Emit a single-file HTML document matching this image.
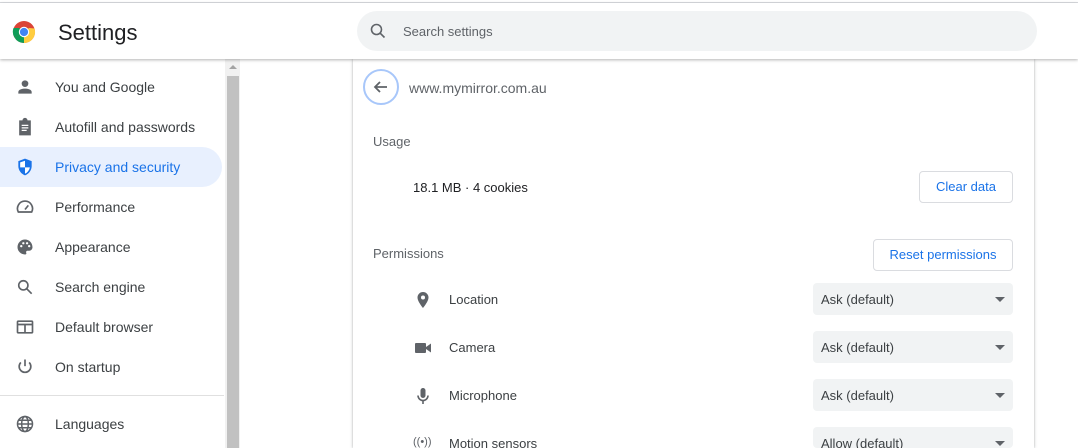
<!DOCTYPE html>
<html style="overflow:hidden;width:1078px;height:448px"><head><meta charset="utf-8"><style>
*{margin:0;padding:0;box-sizing:border-box}
body{width:1078px;height:448px;overflow:hidden;background:#fff;font-family:"Liberation Sans",Arial,sans-serif;position:relative;color:#202124}
.topline{position:absolute;left:0;top:2px;width:1078px;height:1px;background:#dadce0}
.header{position:absolute;left:0;top:3px;width:1078px;height:56px;background:#fff;box-shadow:0 1px 3px rgba(0,0,0,.3);z-index:3}
.title{position:absolute;left:58px;top:17px;font-size:22px;color:#202124}
.search{position:absolute;left:357px;top:8px;width:680px;height:40px;border-radius:20px;background:#f1f3f4}
.search span{position:absolute;left:46px;top:13px;font-size:13px;color:#5f6368}
.side .it{position:absolute;left:0;height:40px;width:222px;font-size:14px;color:#3c4043}
.side .it span{position:absolute;left:55px;top:12px}
.side .it svg{position:absolute;left:15px;top:10px}
.side .sel{background:#e8f0fe;border-radius:0 20px 20px 0;color:#1a73e8}
.sb{position:absolute;left:225px;top:59px;width:15px;height:389px;background:#f1f1f1}
.thumb{position:absolute;left:227px;top:76px;width:12px;height:372px;background:#c1c1c1}
.card{position:absolute;left:353px;top:59px;width:681px;height:389px;background:#fff;box-shadow:0 0 2px rgba(60,64,67,.35),0 1px 4px rgba(60,64,67,.15)}
.t{position:absolute;font-size:13px;color:#3c4043}
.btn{position:absolute;border:1px solid #dadce0;border-radius:4px;color:#1a73e8;font-size:13px;text-align:center;background:#fff}
.dd{position:absolute;left:813px;width:200px;height:32px;background:#f1f3f4;border-radius:4px;font-size:13px;color:#3c4043}
.dd span{position:absolute;left:8px;top:9px}
.dd i{position:absolute;right:8px;top:14px;width:0;height:0;border-left:5px solid transparent;border-right:5px solid transparent;border-top:5px solid #5f6368}
.pi{position:absolute;left:413px}
</style></head><body>
<div class="topline"></div>
<div class="header">
<svg style="position:absolute;left:12px;top:17px" width="24" height="24" viewBox="0 0 24 24">
<circle cx="12" cy="12" r="11" fill="#db4437"/>
<path d="M12 12 L2.5 17.5 A11 11 0 0 0 12 23 Z" fill="#0f9d58"/>
<path d="M12 12 L2.5 17.5 A11 11 0 0 1 1.5 8 L7 8 Z" fill="#0f9d58"/>
<path d="M12 12 L12 23 A11 11 0 0 0 22.5 8.5 L17 8 Z" fill="#ffcd40"/>
<circle cx="12" cy="12" r="5.2" fill="#fff"/><circle cx="12" cy="12" r="4.1" fill="#4285f4"/></svg>
<div class="title">Settings</div>
<div class="search"><svg style="position:absolute;left:13px;top:12px" width="16" height="16" viewBox="0 0 16 16"><circle cx="6.5" cy="6.5" r="5" fill="none" stroke="#5f6368" stroke-width="1.6"/><path d="M10 10l4.5 4.5" stroke="#5f6368" stroke-width="1.6"/></svg><span>Search settings</span></div>
</div>
<div class="sb"></div><div class="thumb"></div>
<div style="position:absolute;left:229px;top:65px;border-left:4px solid transparent;border-right:4px solid transparent;border-bottom:4px solid #a3a3a3"></div>
<div class="side">
<div class="it" style="top:67px"><svg width="20" height="20" viewBox="0 0 24 24" fill="#5f6368"><circle cx="12" cy="8" r="4"/><path d="M4 20v-2c0-3 5-4 8-4s8 1 8 4v2z"/></svg><span>You and Google</span></div>
<div class="it" style="top:107px"><svg width="20" height="20" viewBox="0 0 24 24" fill="#5f6368"><path d="M5 4h4a3 3 0 0 1 6 0h4v18H5z"/><path d="M8 10h8M8 13h8M8 16h6" stroke="#fff" stroke-width="1.5"/></svg><span>Autofill and passwords</span></div>
<div class="it sel" style="top:147px"><svg width="20" height="20" viewBox="0 0 24 24"><path d="M12 2l8 3v6c0 5-3.5 9.5-8 11-4.5-1.5-8-6-8-11V5z" fill="#1a73e8"/><path d="M12 4.5v8H6.2V6.5zM12 12.5h5.8c-.6 3.5-3 6.5-5.8 7.5z" fill="#fff"/></svg><span>Privacy and security</span></div>
<div class="it" style="top:187px"><svg width="20" height="20" viewBox="0 0 24 24" fill="none" stroke="#5f6368" stroke-width="2"><path d="M4 18a9 9 0 1 1 16 0z"/><path d="M12 15l4-5"/></svg><span>Performance</span></div>
<div class="it" style="top:227px"><svg width="20" height="20" viewBox="0 0 24 24" fill="#5f6368"><path d="M12 3a9 9 0 0 0 0 18c1.5 0 2-1 1.5-2s0-2.5 1.5-2.5H17a4 4 0 0 0 4-4C21 7 17 3 12 3z"/><circle cx="7.5" cy="11" r="1.4" fill="#fff"/><circle cx="10" cy="7.5" r="1.4" fill="#fff"/><circle cx="14.5" cy="7.5" r="1.4" fill="#fff"/><circle cx="17" cy="11" r="1.4" fill="#fff"/></svg><span>Appearance</span></div>
<div class="it" style="top:267px"><svg width="20" height="20" viewBox="0 0 24 24" fill="none" stroke="#5f6368" stroke-width="2"><circle cx="10" cy="10" r="5.5"/><path d="M14 14l6 6"/></svg><span>Search engine</span></div>
<div class="it" style="top:307px"><svg width="20" height="20" viewBox="0 0 24 24" fill="none" stroke="#5f6368" stroke-width="2"><rect x="3" y="5" width="18" height="14" rx="1"/><path d="M3 9h18M12 9v10" /></svg><span>Default browser</span></div>
<div class="it" style="top:347px"><svg width="20" height="20" viewBox="0 0 24 24" fill="none" stroke="#5f6368" stroke-width="2"><path d="M12 3v8"/><path d="M7 6.5a7 7 0 1 0 10 0"/></svg><span>On startup</span></div>
<div style="position:absolute;left:0;top:395px;width:224px;height:1px;background:#e0e0e0"></div>
<div class="it" style="top:404px"><svg width="20" height="20" viewBox="0 0 24 24" fill="none" stroke="#5f6368" stroke-width="1.8"><circle cx="12" cy="12" r="9"/><ellipse cx="12" cy="12" rx="4" ry="9"/><path d="M3 12h18M4.5 7.5h15M4.5 16.5h15"/></svg><span>Languages</span></div>
</div>
<div class="card"></div>
<div style="position:absolute;left:363px;top:69px;width:36px;height:36px;border:2px solid #a8c7fa;border-radius:50%"></div>
<svg style="position:absolute;left:372px;top:78px" width="18" height="18" viewBox="0 0 18 18" fill="none" stroke="#5f6368" stroke-width="1.8"><path d="M15 9H3M8 4L3 9l5 5"/></svg>
<div class="t" style="left:409px;top:80px;font-size:14px;color:#5f6368">www.mymirror.com.au</div>
<div class="t" style="left:373px;top:134px;color:#5f6368">Usage</div>
<div class="t" style="left:413px;top:180px;color:#202124">18.1 MB · 4 cookies</div>
<div class="btn" style="left:919px;top:171px;width:94px;height:32px;line-height:30px">Clear data</div>
<div class="t" style="left:373px;top:246px;color:#5f6368">Permissions</div>
<div class="btn" style="left:873px;top:239px;width:140px;height:32px;line-height:30px">Reset permissions</div>
<svg class="pi" style="top:291px" width="20" height="18" viewBox="0 0 20 18"><path d="M10 1a5.5 5.5 0 0 0-5.5 5.5C4.5 10.5 10 17 10 17s5.5-6.5 5.5-10.5A5.5 5.5 0 0 0 10 1z" fill="#5f6368"/><circle cx="10" cy="6.5" r="2" fill="#fff"/></svg>
<div class="t" style="left:449px;top:292px">Location</div>
<svg class="pi" style="top:340px" width="20" height="16" viewBox="0 0 20 16" fill="#5f6368"><rect x="2" y="3" width="11" height="10" rx="1"/><path d="M13 7l5-3.5v9L13 9z"/></svg>
<div class="t" style="left:449px;top:340px">Camera</div>
<svg class="pi" style="top:386px" width="20" height="20" viewBox="0 0 20 20"><rect x="7.5" y="2" width="5" height="10" rx="2.5" fill="#5f6368"/><path d="M5 9.5a5 5 0 0 0 10 0M10 14.5V18" fill="none" stroke="#5f6368" stroke-width="1.6"/></svg>
<div class="t" style="left:449px;top:388px">Microphone</div>
<div class="t" style="left:413px;top:436px;font-size:11px;color:#5f6368">((•))</div>
<div class="t" style="left:449px;top:436px">Motion sensors</div>
<div class="dd" style="top:283px"><span>Ask (default)</span><i></i></div>
<div class="dd" style="top:331px"><span>Ask (default)</span><i></i></div>
<div class="dd" style="top:379px"><span>Ask (default)</span><i></i></div>
<div class="dd" style="top:427px;height:21px"><span>Allow (default)</span><i></i></div>
</body></html>
